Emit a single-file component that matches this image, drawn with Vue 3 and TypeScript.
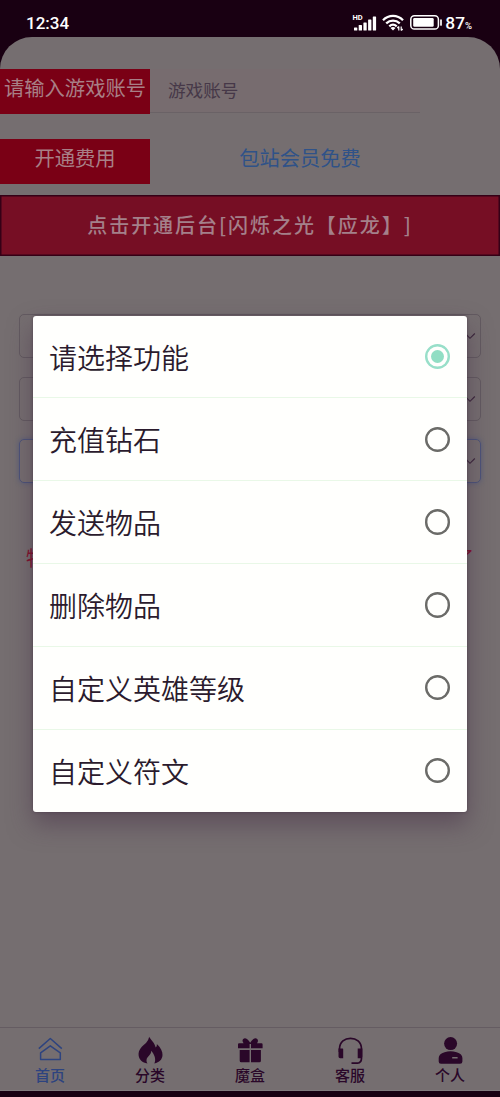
<script setup lang="ts">
import { ref } from 'vue'

const options: string[] = ['请选择功能', '充值钻石', '发送物品', '删除物品', '自定义英雄等级', '自定义符文']
const chosen = ref(0)

interface Tab { name: string; icon: string }
const tabs: Tab[] = [
  { name: '首页', icon: 'home' },
  { name: '分类', icon: 'flame' },
  { name: '魔盒', icon: 'gift' },
  { name: '客服', icon: 'headset' },
  { name: '个人', icon: 'person' },
]
const bars: number[] = [3, 5.5, 8, 11, 14]
</script>

<template>
  <div class="phone">
    <header class="status">
      <span class="time">12:34</span>
      <div class="indicators">
        <svg class="signal" viewBox="0 0 24 17" width="24" height="17">
          <rect v-for="(h, i) in bars" :key="i" :x="1 + i * 4.7" :y="16.5 - h" width="3.3" :height="h" rx=".6" fill="#fff" />
          <text x="-.5" y="6" class="hd">HD</text>
        </svg>
        <svg class="wifi" viewBox="0 0 22 17" width="22" height="17">
          <g fill="none" stroke="#fff" stroke-width="2.3">
            <path d="M1 6.2C6.7.5 15.3.5 21 6.2" />
            <path d="M4.2 9.3C8.2 5.6 13.8 5.6 17.8 9.3" />
            <path d="M7.3 12.3C9.6 10.2 12.4 10.2 14.7 12.3" />
          </g>
          <path d="M8.5 14Q11 12.1 13.5 14L11 16.5Z" fill="#fff" />
          <path d="M16.8 16.5V12.5M16.8 12.5L15.3 14M19.2 12.5V16.5M19.2 16.5L20.7 15" stroke="#fff" stroke-width="1.2" fill="none" />
        </svg>
        <svg class="battery" viewBox="0 0 33 15" width="33" height="15">
          <rect x=".8" y=".8" width="27.6" height="13.2" rx="3.6" fill="none" stroke="#fff" stroke-width="1.5" />
          <rect x="3.2" y="3.1" width="20.5" height="8.7" rx="1.2" fill="#fff" />
          <path d="M31 5V10" stroke="#fff" stroke-width="1.7" stroke-linecap="round" />
        </svg>
        <span class="level">87<small>%</small></span>
      </div>
    </header>

    <main class="screen">
      <div class="line">
        <div class="tag">请输入游戏账号</div>
        <div class="field">游戏账号</div>
      </div>
      <div class="line fee">
        <div class="tag">开通费用</div>
        <div class="free">包站会员免费</div>
      </div>
      <div class="open">点击开通后台[闪烁之光【应龙】]</div>
      <div class="selects">
        <div v-for="n in 3" :key="n" class="select" :class="{ focus: n === 3 }">
          <svg viewBox="0 0 12 8" width="12" height="8"><path d="M1.2 1.5L6 6.3L10.8 1.5" fill="none" stroke="#39253a" stroke-width="1.1" /></svg>
        </div>
      </div>
      <div class="notice"><span>物品</span><span>了</span></div>

      <nav class="tabs">
        <div v-for="(t, i) in tabs" :key="t.name" class="tab" :class="{ active: i === 0 }">
          <svg viewBox="0 0 28 28" width="28" height="28">
            <g v-if="t.icon === 'home'" fill="none" stroke="currentColor" stroke-width="1.5" stroke-linejoin="round">
              <path d="M2.8 12.6L14.3 2.5L25.8 12.6" />
              <path d="M4.6 23.6V16.8L14.3 9.8L24.3 16.8V23.6Z" />
            </g>
            <path v-else-if="t.icon === 'flame'" fill="currentColor" d="M13.2 .8C14.2 3.5 18.6 6.5 19.7 11.5C20.9 10.5 21 8.9 20.8 8C24.9 11.8 26.7 15.8 26.5 19C26.3 23.6 23.3 26.3 18.4 27.4C20.3 23.4 18.6 18.8 15.2 14.8C15.4 19 11.1 20 10.5 24Q10.3 26.2 11.5 27.6C6.3 26.6 3 23.8 2.6 19.3C2.2 13.5 6.1 10.1 10 7Q12.5 4.6 13.2 .8Z" />
            <g v-else-if="t.icon === 'gift'" fill="currentColor">
              <path d="M3 7.3H7.6C4.7 3.6 8.2.7 11 2.9Q13 4.6 14.2 6.8Q15.4 4.6 17.4 2.9C20.2.7 23.7 3.6 21 7.3H25.5Q26.6 7.3 26.6 8.4V12.3H15V8H13.6V12.3H2V8.4Q2 7.3 3 7.3Z" />
              <path d="M3.7 13.9H13.6V26.2H5.2Q3.7 26.2 3.7 24.7ZM15 13.9H24.9V24.7Q24.9 26.2 23.4 26.2H15Z" />
            </g>
            <g v-else-if="t.icon === 'headset'">
              <path d="M3.5 16V13C3.5-1.3 25.5-1.3 25.5 13V22.2Q25.5 27.2 20.5 27.2H15.5" fill="none" stroke="currentColor" stroke-width="1.7" />
              <path d="M2.8 12.6H6.6Q7.2 12.6 7.2 13.4V22.2H4.2Q2.5 22.2 2.5 20.5V12.6ZM21.7 12.6H26.3V20.5Q26.3 22.2 24.6 22.2H21.7Z" fill="currentColor" />
            </g>
            <g v-else fill="currentColor">
              <circle cx="14.6" cy="7.6" r="6.5" />
              <path fill-rule="evenodd" d="M8.6 16.2Q14.5 14.4 20.6 16.2Q26.4 18 26.4 22V25.5Q26.4 27.7 24 27.7H5Q2.7 27.7 2.7 25.5V22Q2.7 18 8.6 16.2ZM16.2 20.9V22.4H21.6V20.9Z" />
            </g>
          </svg>
          <span>{{ t.name }}</span>
        </div>
      </nav>
    </main>

    <div class="dialog">
      <div v-for="(o, i) in options" :key="o" class="option" @click="chosen = i">
        <span>{{ o }}</span>
        <i class="radio" :class="{ on: chosen === i }"></i>
      </div>
    </div>
  </div>
</template>

<style>
body {
  margin: 0;
  background: #190012;
}
</style>

<style scoped>
.phone {
  position: relative;
  width: 500px;
  height: 1097px;
  overflow: hidden;
  display: flex;
  flex-direction: column;
  background: #190012;
  font-family: "Noto Sans CJK SC", sans-serif;
  text-spacing-trim: space-all;
}
.phone * { box-sizing: border-box; }
.status {
  height: 37px;
  flex: none;
  display: flex;
  justify-content: space-between;
  padding: 9px 28px 0 26px;
  color: #fff;
  font-family: Roboto, sans-serif;
  font-weight: 500;
}
.time {
  font-size: 17px;
  line-height: 29px;
}
.indicators { display: flex; align-items: flex-start; }
.signal { margin: 5px 0 0; overflow: visible; }
.hd { font: 700 7.5px Roboto, sans-serif; fill: #fff; }
.wifi { margin: 5px 6px 0 5px; }
.battery { margin: 6px 2px 0 0; }
.level { font-size: 17.3px; line-height: 29px; white-space: nowrap; }
.level small { font-size: 9.5px; }
.screen {
  height: 1054px;
  flex: none;
  display: flex;
  flex-direction: column;
  padding-top: 32px;
  background: #756e70;
  border-radius: 32px 32px 0 0;
}
.line { display: flex; height: 45px; flex: none; }
.fee { margin-top: 25px; }
.tag {
  width: 150px;
  background: #7a0015;
  color: #a87f86;
  font-size: 20.3px;
  line-height: 36px;
  text-align: center;
  white-space: nowrap;
}
.field {
  width: 270px;
  height: 44px;
  padding-left: 18px;
  background: #776c6f;
  border-bottom: 1px solid #6a6266;
  color: #463848;
  font-size: 17.6px;
  line-height: 42px;
}
.free {
  width: 300px;
  text-align: center;
  color: #2f5288;
  font-size: 20.3px;
  line-height: 36px;
}
.open {
  height: 61px;
  flex: none;
  margin-top: 11px;
  border: 1px solid #350016;
  box-shadow: inset 0 0 0 .5px #350016;
  background: #760e24;
  color: #a4808a;
  font-size: 20px;
  font-weight: 500;
  letter-spacing: 1.95px;
  line-height: 58px;
  text-align: center;
  white-space: nowrap;
}
.selects {
  display: flex;
  flex-direction: column;
  gap: 18.5px;
  padding: 58px 19px 0;
}
.select {
  height: 44px;
  display: flex;
  align-items: center;
  justify-content: flex-end;
  padding-right: 4px;
  border: 1px solid #625a60;
  border-radius: 5px;
}
.focus {
  border-color: #4b5379;
  box-shadow: 0 0 5px #555b7c;
}
.notice {
  display: flex;
  justify-content: space-between;
  margin-top: 60px;
  padding: 0 26px;
  color: #830d29;
  font-size: 20px;
  line-height: 30px;
}
.tabs {
  height: 64px;
  flex: none;
  margin-top: auto;
  display: flex;
  border-top: 1px solid #655c62;
  border-bottom: 1px solid #817a7d;
}
.tab {
  flex: 1;
  display: flex;
  flex-direction: column;
  align-items: center;
  padding-top: 8px;
  color: #2a0729;
  font-size: 15px;
  font-weight: 500;
  line-height: 22px;
}
.tab svg { flex: none; }
.active { color: #2d437f; }
.dialog {
  position: absolute;
  left: 33px;
  top: 316px;
  width: 434px;
  height: 495.5px;
  display: grid;
  grid-template-rows: 82.4px repeat(4, 82.8px) 1fr;
  background: #fffffd;
  border-radius: 3px;
  box-shadow: 0 12px 24px rgba(70, 45, 70, .5), 0 0 3px rgba(50, 30, 45, .5);
}
.option {
  display: flex;
  align-items: center;
  justify-content: space-between;
  padding: 0 17px 0 16px;
  border-bottom: 1.5px solid #e9f8e7;
  color: #2b1b2d;
  font-size: 28px;
  font-weight: 350;
  line-height: 40px;
}
.option:last-child { border-bottom: 0; }
.radio {
  width: 25.5px;
  height: 25.5px;
  display: grid;
  place-items: center;
  box-shadow: inset 0 0 0 2.4px #6b6b68;
  border-radius: 50%;
}
.on { box-shadow: inset 0 0 0 2.4px #98dfc9; }
.on::after {
  content: '';
  width: 13px;
  height: 13px;
  border-radius: 50%;
  background: #91dec4;
}
</style>
